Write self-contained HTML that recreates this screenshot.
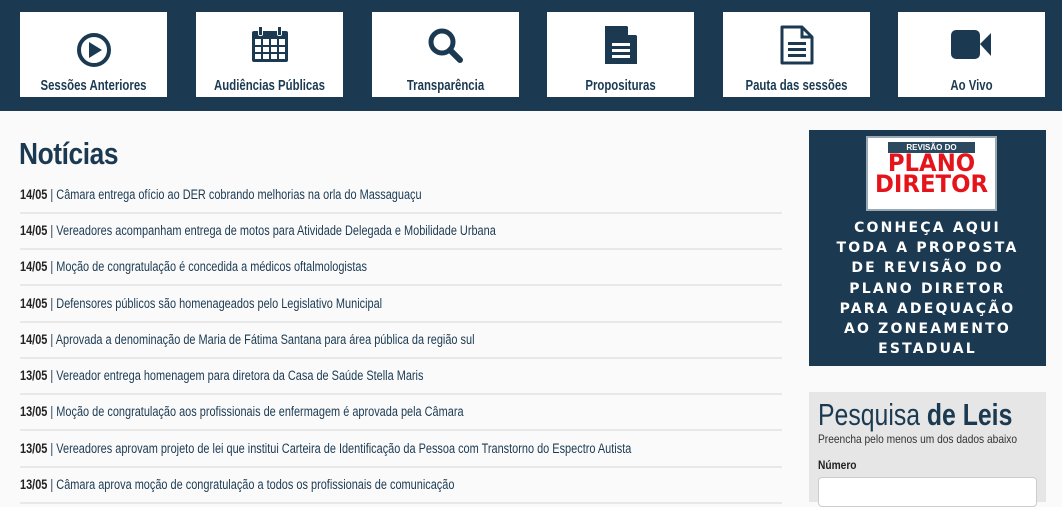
<!DOCTYPE html>
<html><head><meta charset="utf-8"><style>
*{margin:0;padding:0;box-sizing:border-box}
body{width:1062px;height:493px;overflow:hidden;background:#fafafa;font-family:"Liberation Sans",sans-serif;color:#1b3a52;position:relative}
.hdr{position:absolute;left:0;top:0;width:1062px;height:111px;background:#1b3a52}
.box{position:absolute;top:12px;width:147px;height:85px;background:#fff;text-align:center}
.box svg{position:absolute;left:50%;top:20px;transform:translateX(-50%)}
.box .l{position:absolute;left:0;right:0;top:65px;font-size:15px;font-weight:bold;white-space:nowrap;transform:scaleX(.76);color:#1b3a52}
h1{position:absolute;left:19px;top:136px;font-size:31px;font-weight:bold;transform:scaleX(.85);transform-origin:left;letter-spacing:-0.5px}
.row{position:absolute;left:20px;width:762px;height:36px;border-bottom:2px solid #e8e8e8}
.row span{position:absolute;left:0;top:9px;font-size:13.5px;white-space:nowrap;transform:scaleX(.81);transform-origin:left}
.row b{color:#222}
.ban{position:absolute;left:809px;top:130px;width:237px;height:236px;background:#1b3a52;text-align:center}
.logo{position:absolute;left:57px;top:6px;width:131px;height:75px;border:2px solid #9aa8b3;background:#fff;padding:4px}
.logo .rv{background:#2b4a60;color:#fff;font-size:8px;font-weight:bold;height:11px;line-height:11px;margin:0 16px}
.logo .pd{color:#e5141b;font-weight:900;font-size:24px;line-height:21px;font-family:"DejaVu Sans",sans-serif;transform:scaleX(.95)}
.bt{position:absolute;left:0;right:0;top:88px;color:#fff;font-weight:bold;font-family:"DejaVu Sans",sans-serif;font-size:14px;line-height:20.2px;letter-spacing:2.2px}
.pq{position:absolute;left:809px;top:392px;width:237px;height:110px;background:#e6e6e6;padding:6px 9px}
.pq .t{font-size:31px;line-height:34px;transform:scaleX(.8);transform-origin:left;white-space:nowrap}
.pq .s{font-size:12px;transform:scaleX(.85);transform-origin:left;white-space:nowrap;color:#333;margin-top:0}
.pq .n{font-size:12px;font-weight:bold;margin-top:12px;transform:scaleX(.85);transform-origin:left;color:#222}
.pq .in{margin-top:5px;height:30px;background:#fff;border:1px solid #ccc;border-radius:4px}
</style></head><body>
<div class="hdr">
<div class="box" style="left:20px"><svg width="36" height="36" viewBox="0 0 36 36"><circle cx="18" cy="18" r="15" fill="none" stroke="#1b3a52" stroke-width="4"/><path d="M13 10 L26 18 L13 26Z" fill="#1b3a52"/></svg><div class="l">Sessões Anteriores</div></div>
<div class="box" style="left:196px"><svg width="40" height="40" viewBox="0 0 40 40" style="top:12px"><rect x="2" y="7" width="36" height="31" rx="2" fill="#1b3a52"/><g fill="#fff"><rect x="5" y="15" width="6" height="6"/><rect x="13" y="15" width="6" height="6"/><rect x="21" y="15" width="6" height="6"/><rect x="29" y="15" width="6" height="6"/><rect x="5" y="23" width="6" height="5"/><rect x="13" y="23" width="6" height="5"/><rect x="21" y="23" width="6" height="5"/><rect x="29" y="23" width="6" height="5"/><rect x="5" y="30" width="6" height="5"/><rect x="13" y="30" width="6" height="5"/><rect x="21" y="30" width="6" height="5"/><rect x="29" y="30" width="6" height="5"/><rect x="8" y="2" width="5" height="10" rx="2"/><rect x="27" y="2" width="5" height="10" rx="2"/></g><rect x="9" y="3" width="3" height="8" fill="#1b3a52"/><rect x="28" y="3" width="3" height="8" fill="#1b3a52"/></svg><div class="l">Audiências Públicas</div></div>
<div class="box" style="left:372px"><svg width="40" height="40" viewBox="0 0 40 40" style="top:14px"><circle cx="16" cy="16" r="11" fill="none" stroke="#1b3a52" stroke-width="5"/><path d="M24 24 L34 34" stroke="#1b3a52" stroke-width="6" stroke-linecap="round"/></svg><div class="l">Transparência</div></div>
<div class="box" style="left:547px"><svg width="36" height="42" viewBox="0 0 36 42" style="top:12px"><path d="M2 2 H24 L34 12 V40 H2Z" fill="#1b3a52"/><path d="M25 2 L34 11 H25Z" fill="#fff"/><g fill="#fff"><rect x="9" y="19" width="18" height="3"/><rect x="9" y="25" width="18" height="3"/><rect x="9" y="31" width="18" height="3"/></g></svg><div class="l">Proposituras</div></div>
<div class="box" style="left:723px"><svg width="36" height="42" viewBox="0 0 36 42" style="top:12px"><path d="M3 3 H23 L33 13 V39 H3Z" fill="none" stroke="#1b3a52" stroke-width="3" stroke-linejoin="round"/><path d="M23 3 V13 H33" fill="none" stroke="#1b3a52" stroke-width="3"/><g fill="#1b3a52"><rect x="9" y="18" width="18" height="3"/><rect x="9" y="24" width="18" height="3"/><rect x="9" y="30" width="18" height="3"/></g></svg><div class="l">Pauta das sessões</div></div>
<div class="box" style="left:898px"><svg width="44" height="32" viewBox="0 0 44 32" style="top:17px"><rect x="1" y="1" width="29" height="29" rx="5" fill="#1b3a52"/><path d="M30 15 L41 4 V27Z" fill="#1b3a52"/></svg><div class="l">Ao Vivo</div></div>
</div>
<h1>Notícias</h1>
<div class="row" style="top:178px"><span><b>14/05</b> | Câmara entrega ofício ao DER cobrando melhorias na orla do Massaguaçu</span></div>
<div class="row" style="top:214px"><span><b>14/05</b> | Vereadores acompanham entrega de motos para Atividade Delegada e Mobilidade Urbana</span></div>
<div class="row" style="top:250px"><span><b>14/05</b> | Moção de congratulação é concedida a médicos oftalmologistas</span></div>
<div class="row" style="top:287px"><span><b>14/05</b> | Defensores públicos são homenageados pelo Legislativo Municipal</span></div>
<div class="row" style="top:323px"><span><b>14/05</b> | Aprovada a denominação de Maria de Fátima Santana para área pública da região sul</span></div>
<div class="row" style="top:359px"><span><b>13/05</b> | Vereador entrega homenagem para diretora da Casa de Saúde Stella Maris</span></div>
<div class="row" style="top:395px"><span><b>13/05</b> | Moção de congratulação aos profissionais de enfermagem é aprovada pela Câmara</span></div>
<div class="row" style="top:432px"><span><b>13/05</b> | Vereadores aprovam projeto de lei que institui Carteira de Identificação da Pessoa com Transtorno do Espectro Autista</span></div>
<div class="row" style="top:468px"><span><b>13/05</b> | Câmara aprova moção de congratulação a todos os profissionais de comunicação</span></div>
<div class="ban">
<div class="logo"><div class="rv">REVISÃO DO</div><div class="pd">PLANO<br>DIRETOR</div></div>
<div class="bt">CONHEÇA AQUI<br>TODA A PROPOSTA<br>DE REVISÃO DO<br>PLANO DIRETOR<br>PARA ADEQUAÇÃO<br>AO ZONEAMENTO<br>ESTADUAL</div>
</div>
<div class="pq"><div class="t">Pesquisa <b>de Leis</b></div><div class="s">Preencha pelo menos um dos dados abaixo</div><div class="n">Número</div><div class="in"></div></div>
</body></html>
